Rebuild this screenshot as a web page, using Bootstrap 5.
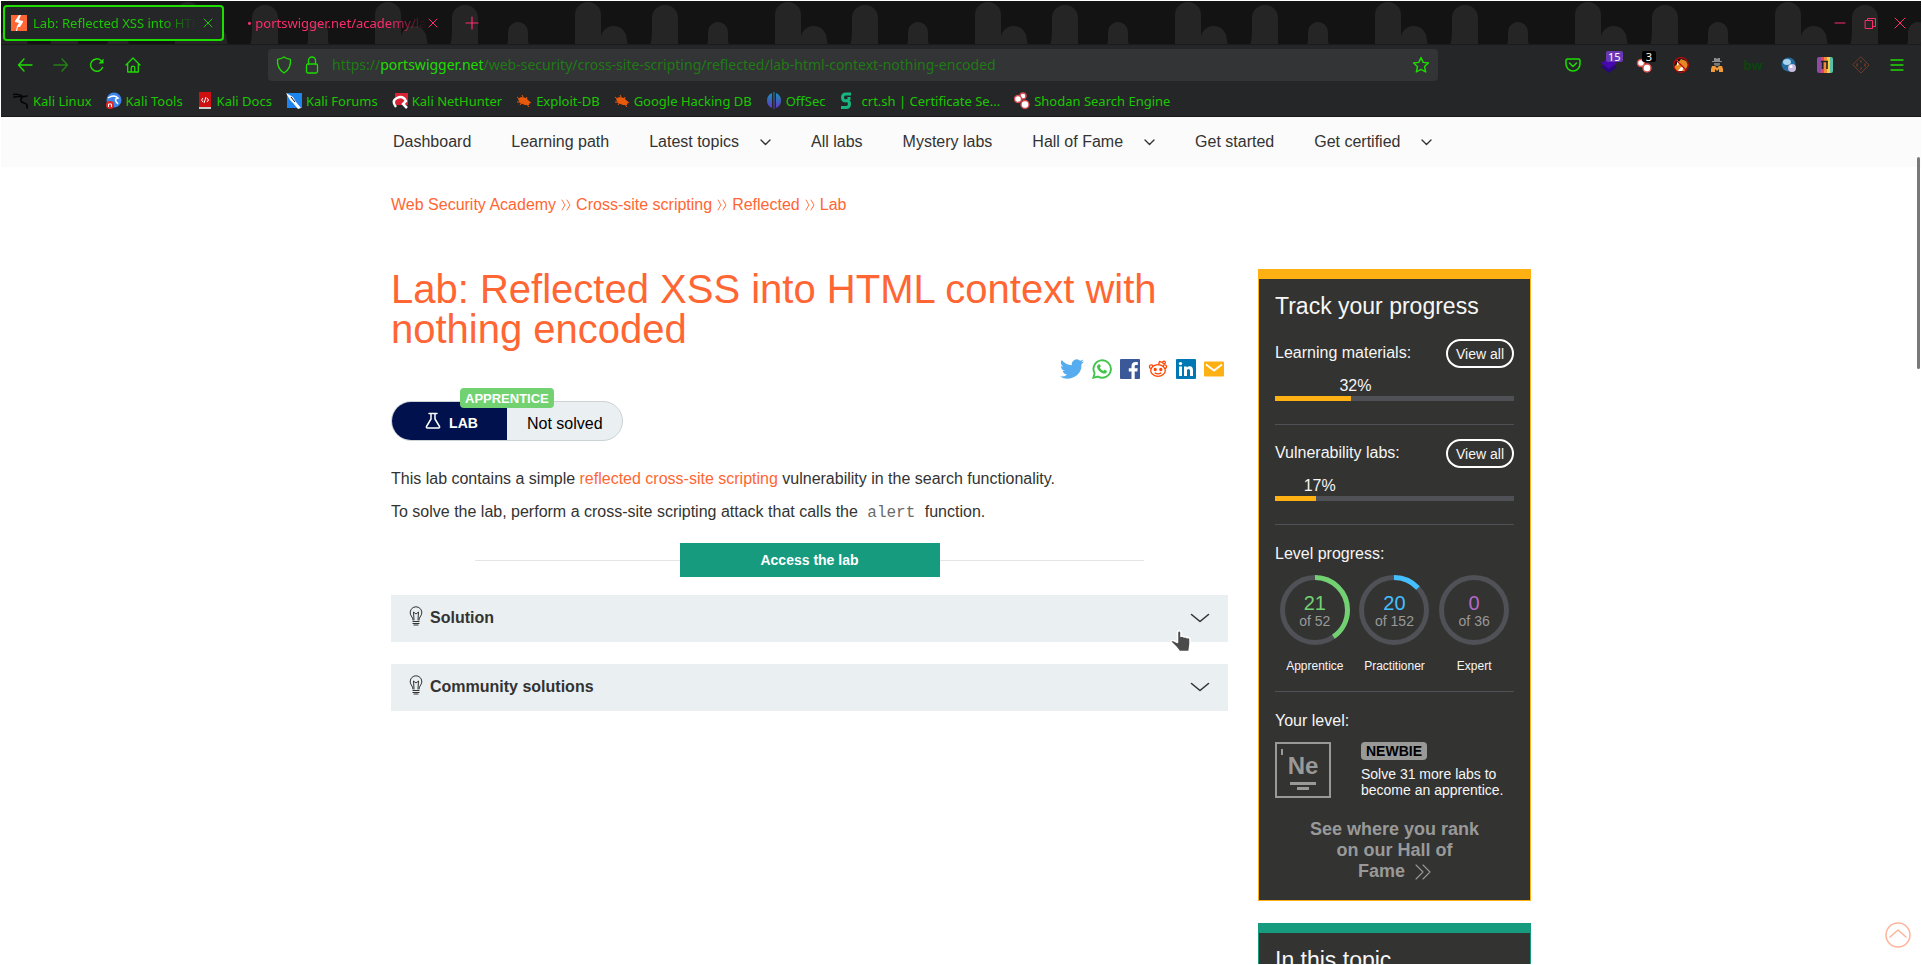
<!DOCTYPE html>
<html lang="en">
<head>
<meta charset="utf-8">
<meta name="viewport" content="width=device-width, initial-scale=1">
<title>Lab: Reflected XSS into HTML context with nothing encoded</title>
<link href="https://cdn.jsdelivr.net/npm/bootstrap@5.3.0/dist/css/bootstrap.min.css" rel="stylesheet">
<style>
  :root { --green: #1edc00; --green-text: #19c800; --pink: #ff2c6b; --orange: #ff6633; --amber: #ffb013; --teal: #169b7f; --panel: #333332; --track: #4f5156; --pale: #eaeff2; }
  body { font-family: "Liberation Sans", Arial, sans-serif; font-size: 16px; line-height: 24px; color: #333332; background: #fff; padding: 1px; }
  a { color: var(--orange); text-decoration: none; }
  button { border: 0; background: none; padding: 0; color: inherit; }
  svg { display: block; flex: none; }
  .ln { fill: none; stroke: currentColor; stroke-linecap: round; stroke-linejoin: round; }

  /* browser chrome */
  .chrome { font-family: "Noto Sans", sans-serif; font-size: 13px; line-height: 18px; color: var(--green-text); background: #252628; border-bottom: 1px solid #17181a; }
  .tabstrip { height: 44px; background: #131313; border-bottom: 1px solid #1a1a1a; }
  .tab-row { padding: 0 14px 0 2px; gap: 2px; }
  .arches { position: absolute; inset: 0; width: 100%; height: 100%; }
  .browser-tab { height: 36px; width: 221px; padding: 0 8px 0 21px; }
  .browser-tab.current { border: 2px solid var(--green); border-radius: 4px; background: #252628; padding-left: 6px; gap: 6px; }
  .tab-label { overflow: hidden; white-space: nowrap; -webkit-mask-image: linear-gradient(90deg, #000 78%, transparent); mask-image: linear-gradient(90deg, #000 78%, transparent); }
  .pink { color: var(--pink); }
  .toolbar-row { height: 40px; color: var(--green); padding: 0 6px; }
  .tool { width: 36px; height: 32px; display: flex; align-items: center; justify-content: center; position: relative; }
  .bw { color: #0b450b; font-size: 13px; font-weight: 700; }
  .urlbar { background: #333436; border-radius: 4px; height: 32px; width: 1170px; }
  .urlbar a { color: #207a15; font-size: 14px; }
  .urlbar b { color: var(--green); font-weight: 400; }
  .count { position: absolute; top: 2px; left: 15px; height: 11px; min-width: 14px; padding: 0 2px; font-size: 11px; line-height: 11px; text-align: center; color: #fff; border-radius: 2px; }
  .bookmarks { height: 31px; gap: 14px; }
  .bookmarks a { color: var(--green-text); display: flex; align-items: center; gap: 4px; white-space: nowrap; }

  /* page */
  .site-wrap { max-width: 1140px; }
  .site-nav { background: #fbfbfb; height: 50px; }
  .site-nav ul { gap: 40px; padding: 0 0 0 2px; }
  .site-nav a { color: #333332; display: flex; align-items: center; gap: 21px; white-space: nowrap; }
  .trail { padding-top: 26px; gap: 5px; }
  .lab-body { margin-top: 52px; gap: 30px; }
  h1 { font-size: 40px; line-height: 40px; font-weight: 400; color: var(--orange); margin: 0; }
  .share { gap: 8px; margin-top: 10px; padding-right: 4px; height: 20px; }
  .pill { margin-top: 22px; height: 40px; width: 232px; border: 1px solid #cbd3d5; border-radius: 20px; background: var(--pale); }
  .pill-left { width: 115px; background: #00114e; color: #fff; border-radius: 20px 0 0 20px; font-size: 14px; font-weight: 700; padding: 4px 0 0 4px; gap: 8px; }
  .pill-state { padding: 6px 0 0 20px; color: #000; }
  .rank { position: absolute; top: -14px; left: 68px; height: 20px; padding: 0 5px; border-radius: 4px; background: #72d272; color: #fff; font-size: 13px; font-weight: 700; line-height: 22px; }
  .copy { margin-top: 26px; }
  .copy p { margin-bottom: 9px; }
  .copy code { font-family: "Liberation Mono", monospace; font-size: 16px; line-height: 20px; color: #6b6b69; padding: 0 5px; }
  .launch { margin: 19px 10% 18px; }
  .launch i { height: 1px; background: #e4e5e6; flex: 1; }
  .launch a { width: 260px; height: 34px; background: var(--teal); color: #fff; font-size: 14px; font-weight: 700; line-height: 34px; text-align: center; }
  .folds { display: grid; gap: 22px; }
  .fold { background: var(--pale); width: 100%; height: 47px; font-weight: 700; padding: 0 18px 2px; gap: 7px; color: #333332; }
  .bulb { margin-bottom: 3px; }

  .side { width: 273px; flex: none; color: #f6f6f6; }
  .box { background: var(--panel); border: 1px solid var(--amber); border-top-width: 10px; padding: 13px 16px 18px; margin-bottom: 22px; }
  .box.topic { border-color: var(--teal); }
  .box h2 { font-size: 23px; line-height: 28px; font-weight: 400; margin: 0 0 19px; }
  .stat { line-height: 28px; height: 29px; }
  .stat a { border: 2px solid #fff; border-radius: 15px; height: 29px; width: 68px; font-size: 14px; line-height: 26px; text-align: center; color: #f6f6f6; }
  .pct { line-height: 20px; margin-top: 8px; }
  .track { height: 5px; background: var(--track); }
  .track div { height: 5px; background: var(--amber); }
  .rule { height: 1px; background: var(--track); margin: 23px 0 14px; }
  .rule.tight { margin-top: 17px; }
  .sub { padding-top: 3px; }
  .rings { margin-top: 9px; }
  .ring-face { width: 70px; height: 70px; position: relative; margin: 0 auto 13px; }
  .ring-face span { position: absolute; inset: 18px 0 auto; font-size: 20px; line-height: 20px; }
  .ring-face small { position: absolute; inset: 37px 0 auto; font-size: 14px; line-height: 18px; color: #999998; }
  .ring-name { font-size: 12px; line-height: 16px; }
  .level { margin-top: 9px; gap: 30px; font-size: 14px; line-height: 16px; }
  .element { width: 56px; height: 56px; border: 2px solid #999998; color: #999998; flex: none; position: relative; font-size: 24px; font-weight: 700; line-height: 24px; text-align: center; padding-top: 10px; }
  .element svg { position: absolute; inset: 0; }
  .newbie { background: #999998; color: #000; font-weight: 700; border-radius: 4px; display: inline-block; padding: 0 5px; line-height: 18px; margin-bottom: 6px; }
  .fame { display: block; margin-top: 21px; padding: 0 30px; font-size: 18px; line-height: 21px; font-weight: 700; text-align: center; color: #999998; }
  .fame svg { display: inline-block; vertical-align: -3px; margin-left: 5px; }

  .hand { position: absolute; right: 36px; top: 34px; z-index: 2; }
  .scroll-thumb { position: absolute; right: 1px; top: 40px; width: 3px; height: 212px; background: #77797a; border-radius: 2px; }
  .to-top { position: absolute; right: 10px; bottom: 16px; }
</style>
</head>
<body class="vh-100 overflow-hidden d-flex flex-column">

<header class="chrome flex-shrink-0">
  <div class="tabstrip position-relative">
    <svg class="arches" aria-hidden="true">
      <defs><pattern id="arch" width="200" height="44" patternUnits="userSpaceOnUse" x="174">
        <path fill="#252525" d="M0 44V14a13 13 0 0 1 26 0v18V35a13 13 0 0 1 25-1q1 7 2 10ZM75 44q2-5 2-11V17a13 13 0 0 1 26 0v27ZM132 44l1-4V31a10 10 0 0 1 20 0v9l1 4Z"/>
      </pattern></defs>
      <rect width="100%" height="44" fill="url(#arch)"/>
    </svg>
    <div class="tab-row position-relative d-flex align-items-center h-100">
      <div class="browser-tab current d-flex align-items-center">
        <svg width="16" height="16" viewBox="0 0 16 16"><rect width="16" height="16" fill="#ff6633"/><path fill="#fff" d="M8 0h2L8 5l4 1v1l-3 5h-2l-1 4H5l1-5 2-3-4-1V6z"/></svg>
        <span class="tab-label flex-grow-1">Lab: Reflected XSS into HTML context</span>
        <button aria-label="Close tab"><svg width="12" height="12" viewBox="0 0 12 12" class="ln"><path d="m2 2 8 8m0-8-8 8"/></svg></button>
      </div>
      <div class="browser-tab d-flex align-items-center pink">
        <span class="tab-label flex-grow-1">• portswigger.net/academy/labs/launch</span>
        <button aria-label="Close tab"><svg width="12" height="12" viewBox="0 0 12 12" class="ln"><path d="m2 2 8 8m0-8-8 8"/></svg></button>
      </div>
      <button class="pink ms-3" aria-label="New tab"><svg width="14" height="14" viewBox="0 0 14 14" class="ln" stroke-width="1.2"><path d="M7 1v12M1 7h12"/></svg></button>
      <div class="ms-auto d-flex pink gap-3">
        <button aria-label="Minimize"><svg width="14" height="14" viewBox="0 0 14 14" class="ln"><path d="M2 7h10"/></svg></button>
        <button aria-label="Restore"><svg width="14" height="14" viewBox="0 0 14 14" class="ln"><path d="M2.500 4.500h7v8h-7zM4.500 4.500v-2h8v8h-3"/></svg></button>
        <button aria-label="Close"><svg width="14" height="14" viewBox="0 0 14 14" class="ln"><path d="m2 2 10 10m0-10L2 12"/></svg></button>
      </div>
    </div>
  </div>

  <div class="toolbar-row d-flex align-items-center">
    <button class="tool" aria-label="Back"><svg width="16" height="16" viewBox="0 0 16 16" class="ln" stroke-width="1.400"><path d="M15 8H1.500M7 2 1.500 8 7 14"/></svg></button>
    <button class="tool opacity-50" aria-label="Forward"><svg width="16" height="16" viewBox="0 0 16 16" class="ln" stroke-width="1.400"><path d="M1 8h13.500M9 2l5.500 6L9 14"/></svg></button>
    <button class="tool" aria-label="Reload"><svg width="16" height="16" viewBox="0 0 16 16" class="ln" stroke-width="1.500"><path d="M13.500 10.500A6.200 6.200 0 1 1 12 3.500"/><path d="M14.500 1.500v5h-5z" fill="currentColor" stroke="none"/></svg></button>
    <button class="tool" aria-label="Home"><svg width="16" height="16" viewBox="0 0 16 16" class="ln" stroke-width="1.300"><path d="m1 8 7-7 7 7M2.700 7v8h10.600V7M6.200 15v-4a1.800 1.800 0 0 1 3.600 0v4"/></svg></button>
    <div class="mx-auto urlbar d-flex align-items-center px-2 flex-shrink-1">
      <svg width="16" height="18" viewBox="0 0 16 18" class="ln" stroke-width="1.300"><path d="M8 1c2 1.500 4 2 6.500 2.300C15 10 13 14 8 17 3 14 1 10 1.500 3.300 4 3 6 2.500 8 1Z"/></svg>
      <svg class="ms-2 me-2" width="24" height="18" viewBox="-4 0 24 18" class="ln"><g class="ln" stroke-width="1.300"><rect x="2.500" y="8" width="11" height="9" rx="1.500"/><path d="M4.500 8V4.500a3.500 3.500 0 0 1 7 0V8"/></g></svg>
      <a href="#" class="text-nowrap">https://<b>portswigger.net</b>/web-security/cross-site-scripting/reflected/lab-html-context-nothing-encoded</a>
      <button class="ms-auto" aria-label="Bookmark this page"><svg width="18" height="18" viewBox="0 0 18 18" class="ln" stroke-width="1.400"><path d="m9 1.500 2.200 4.900 5.300.6-4 3.500 1.200 5.500L9 13.300 4.300 16l1.200-5.500-4-3.500 5.300-.6z"/></svg></button>
    </div>
    <button class="tool" aria-label="Pocket"><svg width="16" height="14" viewBox="0 0 16 14" class="ln" stroke-width="1.500"><path d="M2.500 1h11A1.500 1.500 0 0 1 15 2.500V6A7 7 0 0 1 1 6V2.500A1.500 1.500 0 0 1 2.500 1ZM4.500 5 8 8.500 11.500 5"/></svg></button>
    <button class="tool" aria-label="Wappalyzer"><svg width="16" height="16" viewBox="0 0 16 16"><path fill="#270a78" d="m0 10 8 6 8-6-3-2H3z"/><path fill="#4608ae" d="m0 6 8-5 8 5-8 6z"/></svg><span class="count" style="background:#6a38b5">15</span></button>
    <button class="tool" aria-label="Shodan"><svg width="18" height="18" viewBox="0 0 18 18"><g fill="#fff" stroke="#d9524e" stroke-width="1.500"><circle cx="5" cy="7" r="3.500"/><circle cx="11" cy="12" r="4"/></g></svg><span class="count" style="background:#000">3</span></button>
    <button class="tool" aria-label="Extension"><svg width="16" height="16" viewBox="0 0 16 16"><circle cx="8" cy="8" r="7" fill="#141414"/><path fill="#e48a24" d="M1 10l4-4 3-4 5 2 2 4-3 6H4z"/><path fill="#fff" d="m4 3 3 3-3 3zM8 10l3 0-2 4-4 0z"/><path d="m3 3 10 10" stroke="#c40808" stroke-width="1.200"/><circle cx="8" cy="8" r="7.300" fill="none" stroke="#c40808" stroke-width="1.200"/></svg></button>
    <button class="tool" aria-label="User agent"><svg width="14" height="16" viewBox="0 0 14 16"><path fill="#8c8d8e" d="M4 1h2l1 1 1-1h2v3h2v1H2V4h2z"/><path fill="#777" d="M4 6h6v2L8 9H6L4 8z"/><path fill="#f09a38" d="M2 9h3l2 2 2-2h3l1 3v3h-4V12l-2 2-2-2v3H1v-3z"/></svg></button>
    <button class="tool bw" aria-label="BuiltWith">bw</button>
    <button class="tool" aria-label="Extension"><svg width="16" height="16" viewBox="0 0 16 16"><circle cx="7.500" cy="7.500" r="7" fill="#246b9e"/><ellipse cx="6" cy="5" rx="4" ry="3" fill="#a8d4ed"/><circle cx="11" cy="11" r="4" fill="#c9bce0"/><circle cx="10" cy="9.500" r="1.500" fill="#fff"/></svg></button>
    <button class="tool" aria-label="Extension"><svg width="16" height="16" viewBox="0 0 16 16"><defs><clipPath id="rb"><rect width="16" height="16" rx="2"/></clipPath></defs><g clip-path="url(#rb)"><path fill="#8d4ba5" d="M0 0h4v16H0z"/><path fill="#e2455b" d="M4 0h3v16H4z"/><path fill="#f38a38" d="M7 0h3v16H7z"/><path fill="#f5cf4a" d="M10 0h3v16h-3z"/><path fill="#5cc0a8" d="M13 0h3v16h-3z"/></g><path d="M4 4.500h7M5.500 4.500V12M10 4.500V12" fill="none" stroke="#222" stroke-width="1.600"/></svg></button>
    <button class="tool" aria-label="Extension"><svg width="18" height="18" viewBox="0 0 18 18" class="ln" style="color:#6c3c2a"><path d="m9 1 8 8-8 8-8-8z"/><path d="M9 5v1M9 12v1M5 8v2M13 8v2" stroke-width="1.500"/></svg></button>
    <button class="tool" aria-label="Menu"><svg width="14" height="14" viewBox="0 0 14 14" class="ln" stroke-width="1.400"><path d="M1 2h12M1 7h12M1 12h12"/></svg></button>
  </div>

  <nav class="bookmarks d-flex align-items-center ps-2 ms-1" aria-label="Bookmarks">
    <a href="#"><svg width="16" height="18" viewBox="0 0 16 18" class="ln" style="color:#050505" stroke-width="1.700"><path d="M0 2.500q7-1 10 2M1 5q5-1 8 0-3 5 2 6 4 1 3 5M9 5l5-1"/></svg>Kali Linux</a>
    <a href="#"><svg width="16" height="18" viewBox="0 0 16 18"><circle cx="8" cy="8" r="7.500" fill="#3d85e8"/><path d="M2 6q6-4 10 0-5 1 0 6" fill="none" stroke="#fff" stroke-width="1.500"/><circle cx="4" cy="13" r="4" fill="#e02626"/><path d="M2.500 15v-3h3v3" fill="none" stroke="#fff"/></svg>Kali Tools</a>
    <a href="#"><svg width="16" height="18" viewBox="0 0 16 18"><path fill="#cf1010" d="M2 0h12v15H2z"/><path fill="#ccc" d="M2 15h12v2H2z"/><path d="M6 6 4.500 8 6 10m4-4 1.500 2L10 10M9 5 7 11" fill="none" stroke="#fff"/></svg>Kali Docs</a>
    <a href="#"><svg width="16" height="18" viewBox="0 0 16 18"><path fill="#1e84ee" d="M1 1h15v15H1z"/><path fill="#fff" d="m0 1 7 4 3 5 5 6-3 1-5-6-3-3z"/><path d="m5 5 4 5" stroke="#111"/></svg>Kali Forums</a>
    <a href="#"><svg width="16" height="18" viewBox="0 0 16 18"><path fill="#d82332" d="M3 1h13v12H3z"/><path d="M4 15Q-1 9 5 6q6-3 9 3l-3 3 4 4" fill="none" stroke="#fff" stroke-width="2.500"/></svg>Kali NetHunter</a>
    <a href="#"><svg width="16" height="18" viewBox="0 0 16 18"><g id="bug"><path fill="#e8590c" d="M2 7l3-2 5 1 4 4-1 3-4 0-5-2z"/><path d="m1 5 5 4M1 10h5M6 3l2 4M11 5l-1 3M12 9l3 2M9 10l4 5M6 10l-2 3" stroke="#e8590c"/></g></svg>Exploit-DB</a>
    <a href="#"><svg width="16" height="18" viewBox="0 0 16 18"><use href="#bug"/></svg>Google Hacking DB</a>
    <a href="#"><svg width="16" height="18" viewBox="0 0 16 18"><defs><linearGradient id="off" x2="0" y2="1"><stop stop-color="#1495b8"/><stop offset="1" stop-color="#6433c4"/></linearGradient></defs><path fill="url(#off)" d="M6 1v15Q1 14 1 8.500T6 1ZM7.500 0h1v17h-1zM10 1v15q5-2 5-7.500T10 1Z"/></svg>OffSec</a>
    <a href="#"><svg width="18" height="18" viewBox="0 0 18 18" fill="none" stroke="#16b67e" stroke-width="3"><path d="M11 2H6Q2.500 2 2.500 5.500T6 9M1 15.500h5q3.500 0 3.500-3.500T6 8.500M9 5v3"/></svg>crt.sh | Certificate Se...</a>
    <a href="#"><svg width="16" height="18" viewBox="0 0 16 18"><g fill="#fff" stroke="#d34a50" stroke-width="1.400"><circle cx="9" cy="4" r="3"/><circle cx="4" cy="7" r="3.500"/><circle cx="11" cy="12.500" r="4"/></g></svg>Shodan Search Engine</a>
  </nav>
</header>

<div class="flex-grow-1 overflow-hidden position-relative" style="min-height:0">
  <nav class="site-nav d-flex align-items-center" aria-label="Academy">
    <div class="site-wrap container p-0">
      <ul class="list-unstyled d-flex m-0">
        <li><a href="#">Dashboard</a></li>
        <li><a href="#">Learning path</a></li>
        <li><a href="#">Latest topics <svg width="11" height="8" viewBox="0 0 11 8" class="ln" stroke-width="1.400"><path d="m1 2 4.500 4.500L10 2"/></svg></a></li>
        <li><a href="#">All labs</a></li>
        <li><a href="#">Mystery labs</a></li>
        <li><a href="#">Hall of Fame <svg width="11" height="8" viewBox="0 0 11 8" class="ln" stroke-width="1.400"><path d="m1 2 4.500 4.500L10 2"/></svg></a></li>
        <li><a href="#">Get started</a></li>
        <li><a href="#">Get certified <svg width="11" height="8" viewBox="0 0 11 8" class="ln" stroke-width="1.400"><path d="m1 2 4.500 4.500L10 2"/></svg></a></li>
      </ul>
    </div>
  </nav>

  <div class="site-wrap container p-0">
    <nav class="trail d-flex align-items-center" aria-label="Breadcrumb">
      <a href="#">Web Security Academy</a>
      <svg width="10" height="12" viewBox="0 0 10 12" class="ln" style="color:#ff6633" stroke-width=".9"><path d="m1 1 3 5-3 5M6 1l3 5-3 5"/></svg>
      <a href="#">Cross-site scripting</a>
      <svg width="10" height="12" viewBox="0 0 10 12" class="ln" style="color:#ff6633" stroke-width=".9"><path d="m1 1 3 5-3 5M6 1l3 5-3 5"/></svg>
      <a href="#">Reflected</a>
      <svg width="10" height="12" viewBox="0 0 10 12" class="ln" style="color:#ff6633" stroke-width=".9"><path d="m1 1 3 5-3 5M6 1l3 5-3 5"/></svg>
      <a href="#">Lab</a>
    </nav>

    <div class="lab-body d-flex align-items-start">
      <main class="flex-grow-1">
        <h1>Lab: Reflected XSS into HTML context with nothing encoded</h1>

        <div class="share d-flex justify-content-end align-items-center">
          <a href="#" aria-label="Twitter"><svg width="24" height="20" viewBox="0 0 24 20"><path fill="#55acee" d="M24 2.400a10 10 0 0 1-2.800.8A5 5 0 0 0 23.300.5a10 10 0 0 1-3.100 1.200 5 5 0 0 0-8.400 4.500A14 14 0 0 1 1.700 1a5 5 0 0 0 1.500 6.600A5 5 0 0 1 1 7a5 5 0 0 0 3.900 4.900 5 5 0 0 1-2.200.1 5 5 0 0 0 4.600 3.400A10 10 0 0 1 0 17.500 14 14 0 0 0 21.500 5 10 10 0 0 0 24 2.400Z"/></svg></a>
          <a href="#" aria-label="WhatsApp"><svg width="20" height="20" viewBox="0 0 20 20"><path d="m1.300 18.700 1.300-4.500A8.700 8.700 0 1 1 6 17.600Z" fill="none" stroke="#43c54d" stroke-width="1.900"/><path fill="#43c54d" d="M7 5.200c.6-.2.900 0 1.100.6l.6 1.500c.1.500-.6 1-.8 1.400.8 1.500 2 2.500 3.500 3.200.4-.3.900-1.200 1.300-1.100l2 1c.5.300.2 1.500-.4 2.100-1 .9-2.500.9-4.300.1-2.200-1-4.600-3.600-5-5.800-.2-1.200.7-2.600 2-3Z"/></svg></a>
          <a href="#" aria-label="Facebook"><svg width="20" height="20" viewBox="0 0 20 20"><rect width="20" height="20" rx="1" fill="#3b5998"/><path fill="#fff" d="M11.500 20v-7.500H8.800V9.300h2.700V7c0-2.700 1.600-4 4-4l2.300.1v2.800h-1.600c-1.300 0-1.500.6-1.500 1.500v1.900h3l-.4 3.200h-2.600V20Z"/></svg></a>
          <a href="#" aria-label="Reddit"><svg width="20" height="20" viewBox="0 0 20 20" fill="none" stroke="#ff4500" stroke-width="1.300"><ellipse cx="10" cy="11.500" rx="7.300" ry="5.800"/><path d="M3 9.500a1.800 1.800 0 1 1 2-2M17 9.500a1.800 1.800 0 1 0-2-2M10.500 6l1-3.500 3 .8M6.700 13.700q3.300 2.500 6.600 0"/><circle cx="16" cy="3.500" r="1.300"/><circle cx="7.200" cy="10.500" r="1" fill="#ff4500"/><circle cx="12.800" cy="10.500" r="1" fill="#ff4500"/></svg></a>
          <a href="#" aria-label="LinkedIn"><svg width="20" height="20" viewBox="0 0 20 20"><rect width="20" height="20" rx="1" fill="#0077b5"/><path fill="#fff" d="M3 7.500h3V17H3zM8 7.500h2.800v1.300c.6-1 1.600-1.500 2.900-1.500 2.600 0 3.300 1.700 3.300 4.200V17h-3v-4.800c0-1.200-.2-2.300-1.500-2.300S11 11 11 12.200V17H8z"/><circle cx="4.500" cy="4.600" r="1.700" fill="#fff"/></svg></a>
          <a href="#" aria-label="Email"><svg width="20" height="20" viewBox="0 0 20 20"><rect y="2.500" width="20" height="15" rx="1" fill="#ffb013"/><path d="m2 5.500 8 6 8-6" fill="none" stroke="#fff" stroke-width="1.800"/></svg></a>
        </div>

        <div class="pill d-flex position-relative">
          <div class="pill-left d-flex align-items-center justify-content-center">
            <svg width="16" height="18" viewBox="0 0 16 18" class="ln mb-1" stroke-width="1.500"><path d="M4 1.500h8M6 2v5L1.500 14.500Q1 16 2.500 16h11q1.500 0 1-1.500L10 7V2"/></svg>
            <span>LAB</span>
          </div>
          <div class="pill-state flex-grow-1 d-flex align-items-center">Not solved</div>
          <span class="rank">APPRENTICE</span>
        </div>

        <div class="copy">
          <p>This lab contains a simple <a href="#">reflected cross-site scripting</a> vulnerability in the search functionality.</p>
          <p class="mb-0">To solve the lab, perform a cross-site scripting attack that calls the <code>alert</code> function.</p>
        </div>

        <div class="launch d-flex align-items-center"><i></i><a href="#">Access the lab</a><i></i></div>

        <div class="folds position-relative">
          <button class="fold d-flex align-items-center" type="button">
            <svg width="14" height="20" viewBox="0 0 14 20" class="ln bulb" stroke-width="1"><path d="M4 14q0-2-1.700-4A5.800 5.800 0 1 1 11.700 10Q10 12 10 14M5 14 4.500 6l2.500 2 2.500-2L9 14"/><path d="M4 15.500h6M4 17.500h6M5 19h4" stroke-width="1.200"/></svg>
            <span class="me-auto">Solution</span>
            <svg width="20" height="12" viewBox="0 0 20 12" class="ln" stroke-width="1.600"><path d="m1.500 2.500 8.500 7 8.500-7"/></svg>
          </button>
          <button class="fold d-flex align-items-center" type="button">
            <svg width="14" height="20" viewBox="0 0 14 20" class="ln bulb" stroke-width="1"><path d="M4 14q0-2-1.700-4A5.800 5.800 0 1 1 11.700 10Q10 12 10 14M5 14 4.500 6l2.500 2 2.500-2L9 14"/><path d="M4 15.500h6M4 17.500h6M5 19h4" stroke-width="1.200"/></svg>
            <span class="me-auto">Community solutions</span>
            <svg width="20" height="12" viewBox="0 0 20 12" class="ln" stroke-width="1.600"><path d="m1.500 2.500 8.500 7 8.500-7"/></svg>
          </button>
          <svg class="hand" width="22" height="24" viewBox="0 0 22 24" aria-hidden="true"><path fill="#4b4b4b" stroke="#fff" stroke-width="1.500" stroke-linejoin="round" d="M7.500 13.500V3.500a1.700 1.700 0 0 1 3.500 0V7.500q1.500-1 3 .5 1.500-.8 3 .7 2.500-.5 3 1.300v5l-1 7.500H9.500L6 18 1 13q-.3-2 2.500-1.500Z"/></svg>
        </div>
      </main>

      <aside class="side">
        <section class="box">
          <h2>Track your progress</h2>
          <div class="stat d-flex justify-content-between"><span>Learning materials:</span><a href="#">View all</a></div>
          <div class="pct" style="margin-left:calc(32% - 12px)">32%</div>
          <div class="track"><div style="width:32%"></div></div>
          <div class="rule"></div>
          <div class="stat d-flex justify-content-between"><span>Vulnerability labs:</span><a href="#">View all</a></div>
          <div class="pct" style="margin-left:calc(17% - 12px)">17%</div>
          <div class="track"><div style="width:17%"></div></div>
          <div class="rule"></div>
          <div class="sub">Level progress:</div>
          <div class="rings row g-0 text-center">
            <div class="col-4">
              <div class="ring-face"><svg width="70" height="70" viewBox="0 0 70 70" fill="none" stroke-width="5"><circle cx="35" cy="35" r="32.500" stroke="#4f5156"/><circle cx="35" cy="35" r="32.500" stroke="#72d272" pathLength="100" stroke-dasharray="40.400 100" transform="rotate(-90 35 35)"/></svg><span style="color:#72d272">21</span><small>of 52</small></div>
              <div class="ring-name">Apprentice</div>
            </div>
            <div class="col-4">
              <div class="ring-face"><svg width="70" height="70" viewBox="0 0 70 70" fill="none" stroke-width="5"><circle cx="35" cy="35" r="32.500" stroke="#4f5156"/><circle cx="35" cy="35" r="32.500" stroke="#45c0ff" pathLength="100" stroke-dasharray="13.200 100" transform="rotate(-90 35 35)"/></svg><span style="color:#45c0ff">20</span><small>of 152</small></div>
              <div class="ring-name">Practitioner</div>
            </div>
            <div class="col-4">
              <div class="ring-face"><svg width="70" height="70" viewBox="0 0 70 70" fill="none" stroke-width="5"><circle cx="35" cy="35" r="32.500" stroke="#4f5156"/></svg><span style="color:#b469c8">0</span><small>of 36</small></div>
              <div class="ring-name">Expert</div>
            </div>
          </div>
          <div class="rule tight"></div>
          <div class="sub">Your level:</div>
          <div class="level d-flex">
            <div class="element">Ne<svg width="52" height="52" viewBox="0 0 52 52" fill="#999998"><path d="M4 5h2v6H4zM13 38h26v3H13zM20 43h12v3H20z"/></svg></div>
            <div><span class="newbie">NEWBIE</span><div>Solve 31 more labs to become an apprentice.</div></div>
          </div>
          <a class="fame" href="#">See where you rank on our Hall of <span class="text-nowrap">Fame <svg width="16" height="16" viewBox="0 0 16 16" class="ln" stroke-width="1.100"><path d="m1 1 7 7-7 7M8 1l7 7-7 7"/></svg></span></a>
        </section>
        <section class="box topic">
          <h2>In this topic</h2>
        </section>
      </aside>
    </div>
  </div>

  <div class="scroll-thumb"></div>
  <a class="to-top" href="#" aria-label="Back to top"><svg width="26" height="26" viewBox="0 0 26 26" class="ln" style="color:#ffb39b" stroke-width="1.500"><circle cx="13" cy="13" r="12"/><path d="m5 15 8-7 8 7"/></svg></a>
</div>

<script src="https://cdn.jsdelivr.net/npm/bootstrap@5.3.0/dist/js/bootstrap.bundle.min.js"></script>
</body>
</html>
